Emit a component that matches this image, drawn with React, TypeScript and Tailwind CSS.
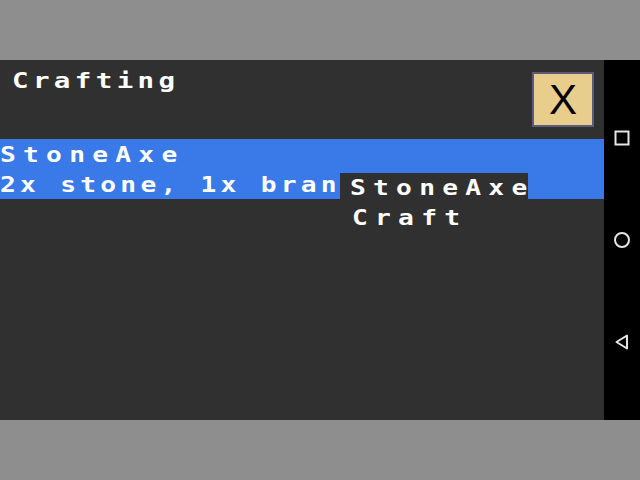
const pixel = { fontFamily: '"DejaVu Sans Mono", monospace' };

const NavBar = () => (
  <div className="w-[36px] bg-black flex flex-col items-center pt-[68px] gap-[82px]">
    <svg width="20" height="20" viewBox="0 0 20 20">
      <rect x="3.5" y="3.5" width="13" height="13" fill="none" stroke="#e6e6e6" strokeWidth="2" />
    </svg>
    <svg width="20" height="20" viewBox="0 0 20 20">
      <circle cx="10" cy="10" r="7" fill="none" stroke="#e6e6e6" strokeWidth="2" />
    </svg>
    <svg width="20" height="20" viewBox="0 0 20 20">
      <path d="M15 3.5 L15 16.5 L4.5 10 Z" fill="none" stroke="#e6e6e6" strokeWidth="2" strokeLinejoin="round" />
    </svg>
  </div>
);

const App = () => {
  return (
    <div className="w-[640px] h-[480px] flex flex-col bg-[#8e8e8e]">
      <div className="h-[60px]" />
      <div className="h-[360px] flex">
        <div className="flex-1 bg-[#303030] relative overflow-hidden">
          <div className="flex justify-between">
            <div
              className="pl-[12px] pt-[6px] text-white font-bold text-[22px] leading-[30px] whitespace-nowrap"
              style={pixel}
            >
              <span className="inline-block origin-left scale-x-125 tracking-[3.5px]">Crafting</span>
            </div>
            <button className="mt-3 mr-[10px] w-[62px] h-[55px] bg-[#e9cd8d] border-2 border-[#5c5c78] flex items-center justify-center text-black text-[42px] leading-none font-['Liberation_Sans',sans-serif]">
              X
            </button>
          </div>
          <div
            className="mt-3 bg-[#3a79e8] text-white font-bold text-[21px] leading-[30px] h-[60px] whitespace-nowrap pt-[1px]"
            style={pixel}
          >
            <div>
              <span className="inline-block origin-left scale-x-125 tracking-[5.8px]">StoneAxe</span>
            </div>
            <div className="w-[340px] overflow-hidden">
              <span className="inline-block origin-left scale-x-125 tracking-[3.4px]">2x stone, 1x bran</span>
            </div>
          </div>
          <div
            className="absolute left-[340px] top-[113px] w-[188px] bg-[#303030] pl-[10px] text-white font-bold text-[21px] leading-[30px] whitespace-nowrap"
            style={pixel}
          >
            <div>
              <span className="inline-block origin-left scale-x-125 tracking-[5.8px]">StoneAxe</span>
            </div>
            <div className="pl-[2px]">
              <span className="inline-block origin-left scale-x-125 tracking-[5.8px]">Craft</span>
            </div>
          </div>
        </div>
        <NavBar />
      </div>
      <div className="h-[60px]" />
    </div>
  );
};

export default App;
